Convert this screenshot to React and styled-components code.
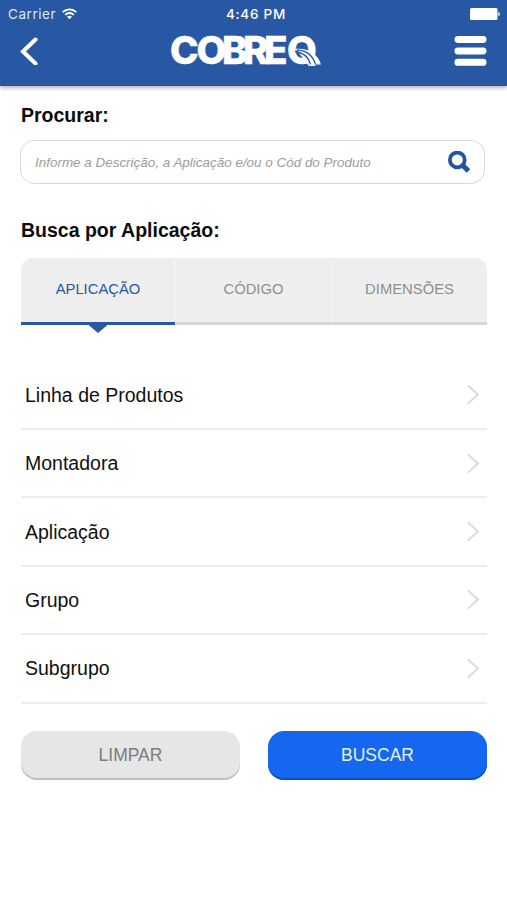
import React from 'react';
import styled, { createGlobalStyle } from 'styled-components';

const GlobalStyle = createGlobalStyle`
    * {
        box-sizing: border-box;
    }
    body {
        margin: 0;
        background: #ffffff;
        font-family: 'Liberation Sans', Arial, sans-serif;
    }
    button {
        border: 0;
        margin: 0;
        padding: 0;
        background: none;
        font-family: inherit;
        cursor: pointer;
    }
`;

const Page = styled.div`
    width: 100%;
    min-height: 900px;
    background-color: #ffffff;
`;

const Header = styled.header`
    height: 86px;
    background-color: #2858a4;
    box-shadow: 0 2px 4px rgba(0, 0, 0, 0.3);
`;
const StatusBar = styled.div`
    display: grid;
    grid-template-columns: 1fr auto 1fr;
    height: 27px;
    padding: 0 7px 0 8px;
    align-items: center;
    font-family: Inter, sans-serif;
    color: #ffffff;
`;
const Carrier = styled.span`
    display: flex;
    align-items: center;
    gap: 6px;
    font-size: 13.5px;
    letter-spacing: 0.55px;
    color: #dde8f8;
`;
const Clock = styled.span`
    padding-left: 4px;
    font-size: 13.5px;
    font-weight: 500;
    letter-spacing: 0.75px;
`;
const BatteryIcon = styled.svg`
    justify-self: end;
`;
const NavBar = styled.nav`
    display: flex;
    justify-content: space-between;
    height: 48px;
    padding: 0 20px;
    align-items: center;
`;
const NavButton = styled.button`
    display: flex;
    width: 33px;
    justify-content: ${({ $align }) => $align};
`;
const LogoImage = styled.svg`
    margin-right: 16px;
    overflow: visible;
`;
const LogoText = styled.text`
    font-family: Inter, sans-serif;
    font-size: 38.5px;
    font-weight: 800;
    fill: #ffffff;
    stroke: #ffffff;
    stroke-width: 0.5px;
`;

const Main = styled.main`
    padding: 17px 20px 0 21px;
`;
const Title = styled.h2`
    margin: 0;
    font-size: 19.5px;
    line-height: 24px;
    color: #0c0c0c;
`;
const SearchBox = styled.div`
    display: flex;
    align-items: center;
    height: 44px;
    margin: 13px 2px 34px -1px;
    padding: 0 14px;
    border: 1.5px solid #d8d8d8;
    border-radius: 14px;
`;
const SearchInput = styled.input`
    flex: 1;
    min-width: 0;
    padding: 0;
    border: 0;
    outline: 0;
    background: none;
    font: italic 13.45px 'Liberation Sans', Arial, sans-serif;
    &::placeholder {
        color: #9c9c9c;
        opacity: 1;
    }
`;

const Tabs = styled.div`
    display: flex;
    height: 67px;
    margin-top: 16px;
`;
const Tab = styled.button`
    position: relative;
    flex: 1;
    padding-bottom: 3px;
    background-color: #eeeeee;
    border-bottom: 3px solid ${({ $active }) => ($active ? '#2858a4' : '#d6d6d6')};
    font-size: 14.8px;
    color: ${({ $active }) => ($active ? '#2858a4' : '#8e8e8e')};
    & + & {
        border-left: 1px solid #f4f4f4;
    }
    &:first-child {
        flex: 0 0 154px;
        border-top-left-radius: 12px;
    }
    &:last-child {
        border-top-right-radius: 12px;
    }
`;
const TabArrow = styled.span`
    position: absolute;
    top: 100%;
    left: 50%;
    margin-left: -13px;
    border: 13px solid transparent;
    border-top: 11px solid #2858a4;
    border-bottom: 0;
`;

const List = styled.ul`
    margin: 36.6px 0 0;
    padding: 0;
    list-style: none;
`;
const Row = styled.li`
    display: flex;
    justify-content: space-between;
    align-items: center;
    height: 68.4px;
    padding: 1px 8px 0 4px;
    border-bottom: 2px solid #ececec;
    font-size: 19.5px;
    color: #111111;
`;

const Actions = styled.div`
    display: flex;
    gap: 28px;
    margin-top: 27.4px;
`;
const ActionButton = styled.button`
    flex: 1;
    height: 49px;
    border-radius: 16px;
    font-size: 17.5px;
    color: ${({ $primary }) => ($primary ? '#e4f1ff' : '#7c7c7c')};
    background-color: ${({ $primary }) => ($primary ? '#1567f0' : '#e6e6e6')};
    box-shadow: inset 0 -2px 0 ${({ $primary }) => ($primary ? '#0b4fc6' : '#c0c0c0')};
`;

const filters = ['Linha de Produtos', 'Montadora', 'Aplicação', 'Grupo', 'Subgrupo'];

function Logo() {
    return (
        <LogoImage width="150" height="32" viewBox="0 0 150 32">
            <LogoText x="-1 25.5 51 72 93 116" y="28.5">
                COBREQ
            </LogoText>
            {/* road sweeping out of the Q */}
            <path d="M123 14C139 12.5 147 20 150 29.5L137 29.5C135 22 131 18 123 14Z" fill="#ffffff" />
            <path
                d="M124 16.5C133 17.5 137.5 22 139.5 29.5M126 15C137 15.5 142 21 144.5 29.5"
                fill="none"
                stroke="#2858a4"
                strokeWidth="1.3"
            />
        </LogoImage>
    );
}

export default function SearchPage() {
    return (
        <>
            <GlobalStyle />
            <Page>
                <Header>
                    <StatusBar>
                        <Carrier>
                            Carrier
                            <svg width="15" height="12" viewBox="0 0 15 12" fill="none" stroke="#ffffff" strokeWidth="1.8">
                                <path d="M0.7 4.2C4.5 0.4 10.5 0.4 14.3 4.2" />
                                <path d="M3.2 6.8C5.6 4.4 9.4 4.4 11.8 6.8" />
                                <path d="M7.5 11.3L5 8.8C6.4 7.5 8.6 7.5 10 8.8Z" fill="#ffffff" stroke="none" />
                            </svg>
                        </Carrier>
                        <Clock>4:46 PM</Clock>
                        <BatteryIcon width="30" height="12" viewBox="0 0 30 12" fill="#ffffff">
                            <rect x="0" y="0" width="27.5" height="12" rx="1.5" />
                            <path d="M28.3 4C30.4 4.6 30.4 7.4 28.3 8Z" />
                        </BatteryIcon>
                    </StatusBar>
                    <NavBar>
                        <NavButton $align="flex-start" aria-label="Voltar">
                            <svg width="18" height="28" viewBox="0 0 18 28" fill="none" stroke="#ffffff" strokeWidth="4">
                                <path d="M15.5 2.5L3 14.5L15.5 26.5" strokeLinecap="round" />
                            </svg>
                        </NavButton>
                        <Logo />
                        <NavButton $align="flex-end" aria-label="Menu">
                            <svg width="33" height="30" viewBox="0 0 33 30" fill="#ffffff">
                                <rect x="0.5" y="0" width="32" height="7" rx="3.4" />
                                <rect x="0.5" y="11.4" width="32" height="7" rx="3.4" />
                                <rect x="0.5" y="22.8" width="32" height="7" rx="3.4" />
                            </svg>
                        </NavButton>
                    </NavBar>
                </Header>
                <Main>
                    <Title>Procurar:</Title>
                    <SearchBox>
                        <SearchInput placeholder="Informe a Descrição, a Aplicação e/ou o Cód do Produto" />
                        <svg width="22" height="22" viewBox="0 0 22 22" fill="none" stroke="#2455a4">
                            <circle cx="9.3" cy="8.9" r="7.4" strokeWidth="3.8" />
                            <path d="M14.6 14.2L20.4 20" strokeWidth="5" />
                        </svg>
                    </SearchBox>
                    <Title>Busca por Aplicação:</Title>
                    <Tabs>
                        <Tab $active>
                            APLICAÇÃO
                            <TabArrow />
                        </Tab>
                        <Tab>CÓDIGO</Tab>
                        <Tab>DIMENSÕES</Tab>
                    </Tabs>
                    <List>
                        {filters.map((name) => (
                            <Row key={name}>
                                {name}
                                <svg width="12" height="20" viewBox="0 0 12 20" fill="none" stroke="#d8d8d8" strokeWidth="1.7">
                                    <path d="M0.8 0.3L11 9.5L0.8 18.7" />
                                </svg>
                            </Row>
                        ))}
                    </List>
                    <Actions>
                        <ActionButton>LIMPAR</ActionButton>
                        <ActionButton $primary>BUSCAR</ActionButton>
                    </Actions>
                </Main>
            </Page>
        </>
    );
}
